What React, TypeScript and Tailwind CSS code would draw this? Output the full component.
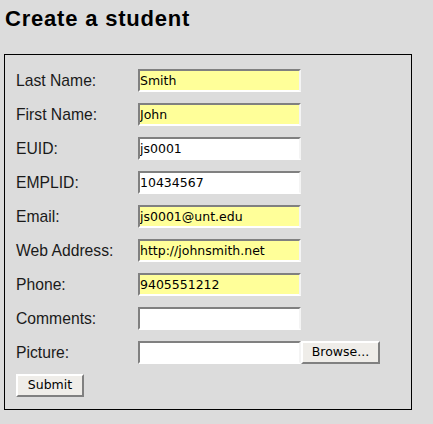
import React from 'react'

const fields = [
  { label: 'Last Name:', value: 'Smith', required: true },
  { label: 'First Name:', value: 'John', required: true },
  { label: 'EUID:', value: 'js0001', required: false },
  { label: 'EMPLID:', value: '10434567', required: false },
  { label: 'Email:', value: 'js0001@unt.edu', required: true },
  { label: 'Web Address:', value: 'http://johnsmith.net', required: true },
  { label: 'Phone:', value: '9405551212', required: true },
  { label: 'Comments:', value: '', required: false },
]

const inputCls =
  "w-[163px] h-[23px] border-2 border-t-[#808080] border-l-[#808080] border-b-white border-r-[#f4f4f4] px-0 text-[12.5px] text-black font-['DejaVu_Sans',sans-serif] outline-none"

const btnCls =
  "h-[23px] border-2 border-t-white border-l-white border-b-[#808080] border-r-[#808080] bg-[#efede9] text-[12.5px] text-black font-['DejaVu_Sans',sans-serif] leading-none"

export default function App() {
  return (
    <div className="min-h-screen bg-[#dcdcdc] font-['Liberation_Sans',Arial,sans-serif] text-[#1a1a1a]">
      <h1 className="pl-[5px] pt-[6px] text-[22px] font-bold leading-[26px] tracking-[0.8px] text-black">
        Create a student
      </h1>

      {/* Form box */}
      <form className="ml-[4px] mt-[22px] w-[408px] h-[356px] border border-black px-[11px] pt-[14px]">
        <div className="flex flex-col gap-[11px]">
          {fields.map((f) => (
            <div key={f.label} className="flex items-center">
              <label className="w-[122px] text-[15.7px] leading-[23px]">{f.label}</label>
              <input
                type="text"
                defaultValue={f.value}
                className={`${inputCls} ${f.required ? 'bg-[#ffff99]' : 'bg-white'}`}
              />
            </div>
          ))}

          <div className="flex items-center">
            <label className="w-[122px] text-[15.7px] leading-[23px]">Picture:</label>
            <input type="text" className={`${inputCls} bg-white`} />
            <button type="button" className={`${btnCls} w-[79px]`}>
              Browse...
            </button>
          </div>
        </div>

        <button type="submit" className={`${btnCls} mt-[10px] w-[68px]`}>
          Submit
        </button>
      </form>
    </div>
  )
}
